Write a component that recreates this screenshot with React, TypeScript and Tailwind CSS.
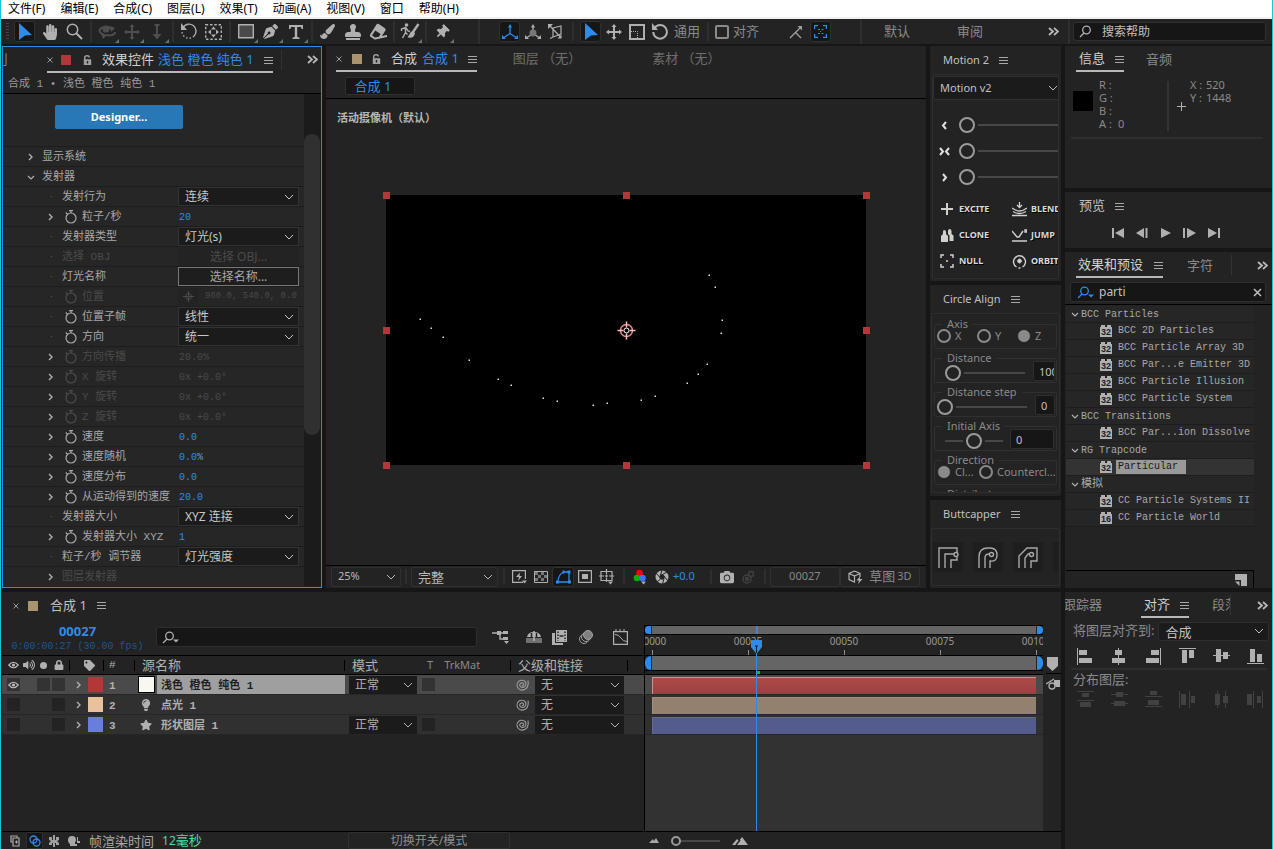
import { Fragment } from "react";
import type { ReactNode } from "react";
import clsx from "clsx";
import {
  FaCamera,
  FaEraser,
  FaHandPaper,
  FaLightbulb,
  FaLock,
  FaPaintBrush,
  FaPenNib,
  FaStamp,
  FaStar,
  FaTag,
  FaThumbtack,
  FaVolumeUp,
} from "react-icons/fa";

const mono = "font-['Liberation_Mono','Noto_Sans_CJK_SC',monospace]";

// ---------- Icons ----------

const Svg = ({
  w = 18,
  h = 18,
  stroke = "none",
  fill = "none",
  sw = 1.5,
  className,
  children,
}: {
  w?: number;
  h?: number;
  stroke?: string;
  fill?: string;
  sw?: number;
  className?: string;
  children: ReactNode;
}) => (
  <svg
    width={w}
    height={h}
    viewBox={`0 0 ${w} ${h}`}
    fill={fill}
    stroke={stroke}
    strokeWidth={sw}
    className={clsx("shrink-0", className)}
    aria-hidden="true"
  >
    {children}
  </svg>
);

const Chevron = ({ className }: { className?: string }) => (
  <Svg w={10} h={6} stroke="currentColor" sw={1} className={className}>
    <path d="M1 1l4 4 4-4" />
  </Svg>
);

const Caret = ({ open }: { open?: boolean }) =>
  open ? (
    <Svg w={8} h={8} stroke="#b0b0b0" sw={1.2}>
      <path d="M1 3l3 3 3-3" />
    </Svg>
  ) : (
    <Svg w={8} h={8} stroke="#b0b0b0" sw={1.4}>
      <path d="M2 1l3 3-3 3" />
    </Svg>
  );

const MenuIcon = () => (
  <Svg w={9} h={9} stroke="#a8a8a8" sw={1}>
    <path d="M0 1.500h9M0 4.500h9M0 7.500h9" />
  </Svg>
);

const MoreIcon = () => (
  <Svg w={11} h={9} stroke="#b8b8b8" sw={1.8}>
    <path d="M1 1l4 3.500-4 3.500M6 1l4 3.500-4 3.500" />
  </Svg>
);

const CloseIcon = () => (
  <Svg w={6} h={6} stroke="#9a9a9a" sw={1}>
    <path d="M.500.500l5 5M5.500.500l-5 5" />
  </Svg>
);

const UnlockIcon = () => (
  <Svg w={9} h={10} stroke="#a0a0a0" sw={1.4}>
    <path d="M1.700 5V2.500a2.300 1.800 0 014.600 0" />
    <path d="M1.500 5h6v4.300h-6z" fill="#a0a0a0" />
    <path d="M4.500 6v2.500" stroke="#232323" />
  </Svg>
);

const SelectIcon = () => (
  <Svg w={14} h={17} fill="#2d8ceb">
    <path d="M1 0l13 12-7 .500L1 17z" />
  </Svg>
);

const ZoomIcon = () => (
  <Svg w={17} h={17} stroke="#b0b0b0">
    <circle cx="6.500" cy="6.500" r="5.200" />
    <path d="M10.500 10.500l5.500 5.500" strokeWidth="2" />
  </Svg>
);

const SearchIcon = ({ color = "#b0b0b0", drop }: { color?: string; drop?: boolean }) => (
  <Svg w={18} h={13} stroke={color} sw={1.3}>
    <circle cx="7.500" cy="5" r="3.800" />
    <path d="M5 8l-4 4" />
    {drop && <path d="M11 8.500h6l-3 3z" fill={color} stroke="none" />}
  </Svg>
);

const OrbitIcon = () => (
  <Svg stroke="#4e4e4e" sw={2}>
    <path d="M6 12C-1 9 1 4 8 4c3 0 5 1 6 2M8 12c5 1 9 0 9-3" />
    <path d="M12 3l5 2-4 4zM3 10l6 2-4 4z" fill="#4e4e4e" stroke="none" />
    <circle cx="8" cy="6" r="3.500" fill="#4e4e4e" stroke="none" />
  </Svg>
);

const MoveIcon = ({ color }: { color: string }) => (
  <Svg w={16} h={16} stroke={color} sw={2}>
    <path d="M8 1v14M1 8h14" />
    <path d="M5.500 3L8 0l2.500 3zM5.500 13L8 16l2.500-3zM3 5.500L0 8l3 2.500zM13 5.500L16 8l-3 2.500z" fill={color} stroke="none" />
  </Svg>
);

const DollyIcon = () => (
  <Svg w={12} h={16} stroke="#4e4e4e" sw={2}>
    <path d="M6 1v12M3.500 1h5" />
    <path d="M1.500 10h9L6 15.500z" fill="#4e4e4e" stroke="none" />
  </Svg>
);

const RotateIcon = ({ dashed }: { dashed?: boolean }) => (
  <Svg w={18} h={17} stroke="#b0b0b0" sw={dashed ? 1.4 : 2}>
    {dashed ? (
      <>
        <path d="M3 4.500A7 7 0 1114 13" />
        <path d="M14 13A7 7 0 012 9" strokeDasharray="1.500 2" />
      </>
    ) : (
      <path d="M3.500 5A6.800 6.800 0 112.300 9" />
    )}
    <path d="M1 0v7h6z" fill="#b0b0b0" stroke="none" />
  </Svg>
);

const RegionIcon = () => (
  <Svg w={17} h={16} stroke="#b0b0b0" sw={1.4}>
    <path d="M.700 .700h15.600v14.600H.700z" strokeDasharray="2.500 1.800" />
    <path d="M8.500 2.500l2.500 3H6zM8.500 13.500l2.500-3H6zM3 8l3-2.500v5zM14 8l-3-2.500v5z" fill="#b0b0b0" stroke="none" />
  </Svg>
);

const RectIcon = () => (
  <Svg w={16} h={15} stroke="#b0b0b0" fill="#4a4a4a" sw={1.4}>
    <path d="M.700 .700h14.600v13.100H.700z" />
  </Svg>
);

const TypeIcon = () => (
  <Svg w={14} h={14} fill="#b0b0b0">
    <path d="M0 0h14v4h-1.500L12 2H8.200v10l2.300.600V14h-7v-1.400l2.300-.600V2H2l-.500 2H0z" />
  </Svg>
);

const RotoIcon = () => (
  <Svg w={20} h={17} stroke="#b0b0b0" sw={1.4}>
    <circle cx="6.500" cy="2" r="1.800" fill="#b0b0b0" stroke="none" />
    <path d="M1.500 8V6l4-1.500v5L2.500 15M6 5l2 3 2 .500M5.500 9.500l2 2" />
    <path d="M18.500 1L13 9" strokeWidth="2.400" />
    <path d="M13 8c-3 0-3 4-5.500 6 3 2 7 .500 7.500-4z" fill="#b0b0b0" stroke="none" />
  </Svg>
);

const AxisIcon = ({ color, ball }: { color: string; ball?: boolean }) => (
  <Svg w={16} h={16} stroke={color} sw={1.3}>
    <path d="M8 2v7.500L2 13.500M8 9.500l6 4" />
    <path d="M6 3.500L8 0l2 3.500zM0 15v-4l4 4zM16 15v-4l-4 4z" fill={color} stroke="none" />
    {ball && <circle cx="8" cy="9" r="3.500" fill="#777" stroke="none" />}
  </Svg>
);

const ViewAxisIcon = () => (
  <Svg w={15} h={16} stroke="#b0b0b0" sw={1.2}>
    <path d="M5 4l8-2v8l-8 3zM1.500 1.500L13 13.500M5 13l-3 1.500" />
    <path d="M0 0h5L0 5zM9.500 14.500h4v-4z" fill="#b0b0b0" stroke="none" />
  </Svg>
);

const ScaleIcon = () => (
  <Svg w={16} h={16} stroke="#b0b0b0" sw={2}>
    <path d="M1 1h14v14H1z" />
    <path d="M2 7.500h6.500V14" strokeWidth="1" strokeDasharray="1 1" />
  </Svg>
);

const SnapIcon = () => (
  <Svg w={14} h={14} stroke="#a0a0a0" sw={1.3}>
    <path d="M1 13l5.500-5.500L12 13M6.500 7.500L11 3" />
    <path d="M8.500 1H13v4.500z" fill="#a0a0a0" stroke="none" />
  </Svg>
);

const FrameIcon = () => (
  <Svg w={13} h={13} stroke="#2d8ceb" sw={1.2}>
    <path d="M.600 4V.600H4M9 .600h3.400V4M12.400 9v3.400H9M4 12.400H.600V9" />
    <path d="M4 4.500h2M7.500 4.500h2M4 8.500h2M7.500 8.500h2M6 6.500h1" />
  </Svg>
);

const StopwatchIcon = ({ dim }: { dim?: boolean }) => (
  <Svg w={12} h={14} stroke={dim ? "#4c4c4c" : "#a8a8a8"} sw={1.2}>
    <circle cx="6" cy="8" r="5" />
    <path d="M4 .600h4M6 1v2M.800 2.500l1.500 1.500" />
  </Svg>
);

const EyeIcon = () => (
  <Svg w={11} h={8} stroke="#b8b8b8" sw={1.2}>
    <path d="M.800 4Q5.500-1.500 10.200 4 5.500 9.500.800 4z" />
    <circle cx="5.500" cy="4" r="1.600" fill="#b8b8b8" stroke="none" />
  </Svg>
);

const SwirlIcon = () => (
  <Svg w={13} h={12} stroke="#a0a0a0" sw={1.1}>
    <path d="M6 6.500c.800.300 1.700-.200 1.700-1 0-1.200-1.200-1.800-2.300-1.500C4 4.400 3.400 5.800 4 7c.800 1.500 3 1.900 4.500.900C10.300 6.700 10.400 4 9 2.500 7.500 1 4.500.700 2.700 2.300.800 4 .600 7 2 9c1.500 2 4.500 2.500 7 1.300C11.500 9 12.600 5.500 12 1.500" />
  </Svg>
);

const Badge = ({ label }: { label: string }) => (
  <span className="relative inline-flex h-3 w-3 items-end justify-center bg-[#b0b0b0] font-['Liberation_Sans',sans-serif] text-[9px] leading-[10px] font-bold text-[#222]">
    {label}
    <span className="absolute top-0 left-0 h-[2px] w-px bg-[#232323]" />
    <span className="absolute top-0 left-[5px] h-[2px] w-[2px] bg-[#232323]" />
    <span className="absolute top-0 right-0 h-[2px] w-px bg-[#232323]" />
  </span>
);

// ---------- Shared controls ----------

const Dropdown = ({
  label,
  value,
  className,
}: {
  label: string;
  value: string;
  className?: string;
}) => (
  <span className={clsx("relative flex items-center", className)}>
    <select
      aria-label={label}
      defaultValue={value}
      className="h-full w-full appearance-none bg-transparent pr-5 pl-[6px] outline-none"
    >
      <option>{value}</option>
    </select>
    <Chevron className="pointer-events-none absolute right-1" />
  </span>
);

const Slider = ({
  label,
  value = 0,
  small,
  className,
}: {
  label: string;
  value?: number;
  small?: boolean;
  className?: string;
}) => (
  <input
    type="range"
    aria-label={label}
    defaultValue={value}
    className={clsx(
      "h-4 min-w-0 appearance-none bg-transparent [&::-webkit-slider-runnable-track]:h-[2px] [&::-webkit-slider-runnable-track]:bg-[#474747] [&::-webkit-slider-thumb]:appearance-none [&::-webkit-slider-thumb]:rounded-full [&::-webkit-slider-thumb]:border-2 [&::-webkit-slider-thumb]:border-[#9a9a9a] [&::-webkit-slider-thumb]:bg-[#232323]",
      small
        ? "[&::-webkit-slider-thumb]:-mt-1 [&::-webkit-slider-thumb]:size-[10px]"
        : "[&::-webkit-slider-thumb]:-mt-[7px] [&::-webkit-slider-thumb]:size-4 [&::-webkit-slider-thumb]:shadow-[3px_0_0_#232323,-3px_0_0_#232323]",
      className
    )}
  />
);

const Tab = ({ children, className }: { children: ReactNode; className?: string }) => (
  <div
    className={clsx(
      "flex h-[26px] items-center border-b-2 border-[#b8b8b8] pt-[2px] whitespace-nowrap text-[#d0d0d0]",
      className
    )}
  >
    {children}
  </div>
);

// ---------- Menu bar and tools ----------

const menus = ["文件(F)", "编辑(E)", "合成(C)", "图层(L)", "效果(T)", "动画(A)", "视图(V)", "窗口", "帮助(H)"];

const MenuBar = () => (
  <nav className="flex h-[19px] items-center gap-[15px] border-b-2 border-[#f0f0f0] bg-white pl-[7px] text-xs leading-4 text-black">
    {menus.map((m) => (
      <button key={m} className="whitespace-nowrap">
        {m}
      </button>
    ))}
  </nav>
);

type Tool = { name: string; icon: ReactNode; active?: boolean; more?: boolean };

const toolGroups: Tool[][] = [
  [
    { name: "选取", icon: <SelectIcon />, active: true },
    { name: "手形", icon: <FaHandPaper size={16} /> },
    { name: "缩放", icon: <ZoomIcon /> },
  ],
  [
    { name: "绕光标旋转", icon: <OrbitIcon />, more: true },
    { name: "平移", icon: <MoveIcon color="#4e4e4e" />, more: true },
    { name: "推拉", icon: <DollyIcon />, more: true },
  ],
  [
    { name: "旋转", icon: <RotateIcon dashed /> },
    { name: "向后平移", icon: <RegionIcon /> },
  ],
  [
    { name: "矩形", icon: <RectIcon />, more: true },
    { name: "钢笔", icon: <FaPenNib size={15} />, more: true },
    { name: "文字", icon: <TypeIcon />, more: true },
  ],
  [
    { name: "画笔", icon: <FaPaintBrush size={15} /> },
    { name: "仿制图章", icon: <FaStamp size={16} /> },
    { name: "橡皮擦", icon: <FaEraser size={17} className="-rotate-12" /> },
  ],
  [{ name: "Roto 笔刷", icon: <RotoIcon />, more: true }],
  [{ name: "人偶位置控点", icon: <FaThumbtack size={14} className="rotate-45" />, more: true }],
];

const Divider = ({ className }: { className?: string }) => (
  <span className={clsx("w-[2px] shrink-0 self-stretch bg-[#2e2e2e]", className)} />
);

const ToolButton = ({ tool, className }: { tool: Tool; className: string }) => (
  <button
    aria-label={tool.name}
    className={clsx("relative flex h-[22px] shrink-0 items-center justify-center text-[#b0b0b0]", className)}
  >
    <span
      className={clsx(
        "flex h-[21px] w-[21px] items-center justify-center rounded-[3px]",
        tool.active && "border border-[#303030] bg-[#161616]"
      )}
    >
      {tool.icon}
    </span>
    {tool.more && (
      <Svg w={4} h={4} fill="#707070" className="absolute right-0 bottom-0">
        <path d="M4 0v4H0z" />
      </Svg>
    )}
  </button>
);

const axisTools: Tool[] = [
  { name: "本地轴", icon: <AxisIcon color="#2d8ceb" />, active: true },
  { name: "世界轴", icon: <AxisIcon color="#b0b0b0" ball /> },
  { name: "视图轴", icon: <ViewAxisIcon /> },
];

const gizmoTools: Tool[] = [
  { name: "通用控件", icon: <SelectIcon />, active: true },
  { name: "位置控件", icon: <MoveIcon color="#b0b0b0" /> },
  { name: "缩放控件", icon: <ScaleIcon /> },
  { name: "旋转控件", icon: <RotateIcon /> },
];

const Toolbar = () => (
  <div className="flex h-[25px] items-center bg-[#232323] text-[13px] text-[#8a8a8a]">
    <Svg w={3} h={18} stroke="#454545" sw={3} className="mr-[3px] ml-[5px]">
      <path d="M1.500 0v18" strokeDasharray="1 2" />
    </Svg>
    {toolGroups.map((group, i) => (
      <Fragment key={i}>
        {i > 0 && <Divider className="my-[2px] mr-[2px] ml-[3px]" />}
        {group.map((t) => (
          <ToolButton key={t.name} tool={t} className="w-[25px]" />
        ))}
      </Fragment>
    ))}
    <Divider className="mr-[18px] ml-6" />
    {axisTools.map((t) => (
      <ToolButton key={t.name} tool={t} className="w-[23px]" />
    ))}
    <Divider className="mx-[5px] my-[3px]" />
    {gizmoTools.map((t) => (
      <ToolButton key={t.name} tool={t} className="w-[23px]" />
    ))}
    <span className="mr-[7px] ml-[3px] shrink-0">通用</span>
    <Divider className="my-[3px]" />
    <label className="ml-[6px] flex shrink-0 items-center gap-1">
      <input type="checkbox" className="size-[14px] appearance-none rounded-[2px] border-2 border-[#8a8a8a]" />
      对齐
    </label>
    <button aria-label="对齐选项" className="ml-[30px] shrink-0">
      <SnapIcon />
    </button>
    <ToolButton tool={{ name: "边界", icon: <FrameIcon />, active: true }} className="ml-1 w-[27px]" />
    <div className="flex min-w-0 flex-1 items-center self-stretch">
      <Divider className="ml-auto" />
      <button className="ml-[22px]">默认</button>
      <button className="ml-[47px]">审阅</button>
      <button aria-label="更多工作区" className="mr-[9px] ml-[65px]">
        <MoreIcon />
      </button>
    </div>
    <Divider className="mr-[3px]" />
    <label className="mr-[6px] flex h-[19px] w-[193px] shrink-0 items-center gap-[5px] rounded-[3px] border border-[#303030] bg-[#161616] pl-[5px]">
      <SearchIcon />
      <input
        aria-label="搜索帮助"
        placeholder="搜索帮助"
        className="min-w-0 flex-1 bg-transparent text-xs outline-none placeholder:text-[#c0c0c0]"
      />
    </label>
  </div>
);

// ---------- Effect controls ----------

type Param = {
  label: string;
  level?: number;
  arrow?: "open" | "closed";
  watch?: boolean;
  dim?: boolean;
  kind?: "select" | "num" | "button" | "point";
  value?: string;
  unit?: string;
};

const params: Param[] = [
  { label: "显示系统", level: 0, arrow: "closed" },
  { label: "发射器", level: 0, arrow: "open" },
  { label: "发射行为", kind: "select", value: "连续" },
  { label: "粒子/秒", arrow: "closed", watch: true, kind: "num", value: "20" },
  { label: "发射器类型", kind: "select", value: "灯光(s)" },
  { label: "选择 OBJ", kind: "button", value: "选择 OBJ...", dim: true },
  { label: "灯光名称", kind: "button", value: "选择名称..." },
  { label: "位置", watch: true, kind: "point", value: "960.0, 540.0, 0.0", dim: true },
  { label: "位置子帧", watch: true, kind: "select", value: "线性" },
  { label: "方向", watch: true, kind: "select", value: "统一" },
  { label: "方向传播", arrow: "closed", watch: true, kind: "num", value: "20.0%", dim: true },
  { label: "X 旋转", arrow: "closed", watch: true, kind: "num", value: "0x +0.0°", dim: true },
  { label: "Y 旋转", arrow: "closed", watch: true, kind: "num", value: "0x +0.0°", dim: true },
  { label: "Z 旋转", arrow: "closed", watch: true, kind: "num", value: "0x +0.0°", dim: true },
  { label: "速度", arrow: "closed", watch: true, kind: "num", value: "0.0" },
  { label: "速度随机", arrow: "closed", watch: true, kind: "num", value: "0.0", unit: "%" },
  { label: "速度分布", arrow: "closed", watch: true, kind: "num", value: "0.0" },
  { label: "从运动得到的速度", arrow: "closed", watch: true, kind: "num", value: "20.0" },
  { label: "发射器大小", kind: "select", value: "XYZ 连接" },
  { label: "发射器大小 XYZ", arrow: "closed", watch: true, kind: "num", value: "1" },
  { label: "粒子/秒 调节器", kind: "select", value: "灯光强度" },
  { label: "图层发射器", arrow: "closed", dim: true },
];

const ParamValue = ({ param }: { param: Param }) => {
  const { label, kind, value, dim, unit } = param;
  if (kind === "select") {
    return (
      <Dropdown
        label={label}
        value={value!}
        className="h-[19px] w-[121px] border border-[#333] bg-[#1b1b1b] text-xs leading-4 text-[#c8c8c8]"
      />
    );
  }
  if (kind === "button") {
    return (
      <button
        disabled={dim}
        className={clsx(
          "h-[19px] w-[121px] text-xs leading-4",
          dim ? "bg-[#232323] text-[#4a4a4a]" : "border border-[#777] bg-[#1e1e1e] text-[#a8a8a8]"
        )}
      >
        {value}
      </button>
    );
  }
  if (kind === "point") {
    return (
      <span className={clsx("flex items-center text-[9px] whitespace-pre text-[#4a4a4a]", mono)}>
        <span className="mr-[6px] flex h-[17px] w-[21px] items-center justify-center bg-[#232323]">
          <Svg w={11} h={11} stroke="#4a4a4a" sw={1}>
            <circle cx="5.500" cy="5.500" r="3" />
            <path d="M5.500 0v11M0 5.500h11" />
          </Svg>
        </span>
        {value}
      </span>
    );
  }
  return (
    <span className={clsx("pt-[2px] pl-px text-[10px]", mono, dim ? "text-[#4a4a4a]" : "text-[#2d8ceb]")}>
      {value}
      {unit && <span className="text-[#6f9cc8]">{unit}</span>}
    </span>
  );
};

const ParamRow = ({ param }: { param: Param }) => (
  <li className="flex h-5 items-center border-t border-[#1d1d1d]">
    <div
      className={clsx(
        "flex w-[175px] shrink-0 items-center text-[11px] leading-4 whitespace-nowrap",
        mono,
        param.level === 0 ? "pl-6" : "pl-11",
        param.dim ? "text-[#4a4a4a]" : "text-[#a8a8a8]"
      )}
    >
      <span className="mr-[7px] flex w-2 justify-center">
        {param.arrow ? <Caret open={param.arrow === "open"} /> : <span className="size-px bg-[#555]" />}
      </span>
      {param.watch && (
        <span className="mr-[5px] ml-[3px]">
          <StopwatchIcon dim={param.dim} />
        </span>
      )}
      {param.label}
    </div>
    {param.kind && <ParamValue param={param} />}
  </li>
);

const EffectControls = () => (
  <section className="flex w-[320px] shrink-0 flex-col border border-[#2d8ceb] bg-[#232323] pb-px">
    <div className="flex h-7 items-start text-[13px]">
      <span className="flex h-[26px] w-[5px] items-center justify-end overflow-hidden text-[#888]">刂</span>
      <Tab className="ml-[39px]">
        <CloseIcon />
        <span className="mr-3 ml-2 size-[10px] bg-[#b53638]" />
        <UnlockIcon />
        <span className="mr-1 ml-[10px]">效果控件</span>
        <span className="mr-[10px] text-[#2d8ceb]">浅色 橙色 纯色 1</span>
        <MenuIcon />
      </Tab>
      <span className="mt-[3px] ml-2 h-5 w-px bg-[#333]" />
      <button aria-label="更多面板" className="mt-2 mr-[3px] ml-auto">
        <MoreIcon />
      </button>
    </div>
    <div
      className={clsx(
        "flex h-[19px] items-center border-b border-black pt-px pl-[5px] text-[11px] whitespace-nowrap text-[#989898]",
        mono
      )}
    >
      合成 1 • 浅色 橙色 纯色 1
    </div>
    <div className="flex flex-1">
      <div className="min-w-0 flex-1 bg-[#262626]">
        <div className="h-[52px] pt-[9px] pl-[52px]">
          <button className="h-6 w-32 rounded-[2px] bg-[#2878b8] text-[11px] leading-5 font-bold text-white">
            Designer...
          </button>
        </div>
        <ul>
          {params.map((p) => (
            <ParamRow key={p.label} param={p} />
          ))}
        </ul>
      </div>
      <div className="w-[17px] bg-[#1b1b1b] pt-10 pr-px">
        <div className="h-[301px] rounded-full bg-[#303030]" />
      </div>
    </div>
  </section>
);

// ---------- Composition viewer ----------

const particles = [
  [323, 80], [329, 92], [336, 125], [335, 138], [321, 169], [312, 179], [301, 188], [269, 201], [255, 205], [221, 208],
  [207, 210], [171, 206], [157, 203], [125, 190], [112, 184], [83, 165], [57, 142], [45, 133], [34, 124],
];

const handles = [
  [0, 0], [240, 0], [480, 0],
  [0, 135], [480, 135],
  [0, 270], [240, 270], [480, 270],
];

const ViewerBar = () => (
  <div className="flex h-[23px] items-center border-t border-black pb-px pl-[5px] text-[13px] text-[#b8b8b8]">
    <Dropdown label="放大率" value="25%" className="h-5 w-[70px] rounded-[2px] border border-[#303030] text-[11px]" />
    <Divider className="mx-1 my-[3px]" />
    <Dropdown label="分辨率" value="完整" className="h-5 w-[87px] rounded-[2px] border border-[#303030]" />
    <Divider className="my-[3px] mr-[3px] ml-[5px]" />
    <div className="flex">
      <button aria-label="快速预览" className="flex h-5 w-[22px] items-center justify-center">
        <Svg w={15} h={14} stroke="#b0b0b0" sw={1.2}>
          <path d="M11 12.400H.600V.600h12.800V9" />
          <path d="M8 2.500L4 7h3l-1 4 4-5H7.500zM10 10.500h5l-2.500 3z" fill="#b0b0b0" stroke="none" />
        </Svg>
      </button>
      <button aria-label="透明网格" className="flex h-5 w-[22px] items-center justify-center">
        <Svg w={14} h={12} stroke="#b0b0b0" sw={1}>
          <path d="M.500.500h13v11H.500z" />
          <path d="M1 1h3v3H1zM7 1h3v3H7zM4 4h3v3H4zM10 4h3v3h-3zM1 7h3v3H1zM7 7h3v3H7z" fill="#777" stroke="none" />
        </Svg>
      </button>
      <button aria-label="蒙版可见性" className="flex h-5 w-[22px] items-center justify-center rounded-[3px] border border-[#303030] bg-[#161616]">
        <Svg w={15} h={14} stroke="#2d8ceb" sw={1.3}>
          <path d="M2 12C2 7 4 3.500 8 2h5v10z" />
          <path d="M0 10.500h3v3H0zM12 10.500h3v3h-3zM11.500.500h3v3h-3zM6.500.500h2v3h-2z" fill="#2d8ceb" stroke="none" />
        </Svg>
      </button>
      <button aria-label="目标区域" className="flex h-5 w-[22px] items-center justify-center">
        <Svg w={14} h={13} stroke="#b0b0b0" sw={1.2}>
          <path d="M.600.600h12.800v11.800H.600z" />
          <path d="M4 4h6v5H4z" fill="#b0b0b0" stroke="none" />
        </Svg>
      </button>
      <button aria-label="网格和参考线" className="flex h-5 w-[22px] items-center justify-center">
        <Svg w={16} h={16} stroke="#b0b0b0" sw={1.2}>
          <path d="M2 2.500h11v9H2zM7.500 0v5M7.500 9v4M0 7h5M10 7h5M6 7h3M7.500 5.500v3" />
          <path d="M9 12.500h5l-2.500 3z" fill="#b0b0b0" stroke="none" />
        </Svg>
      </button>
    </div>
    <Divider className="my-[3px] mr-1 ml-[5px]" />
    <button aria-label="显示通道" className="flex w-[22px] justify-center">
      <Svg w={14} h={16}>
        <circle cx="6.500" cy="4" r="3.300" fill="#ff0000" />
        <circle cx="4" cy="9" r="3.300" fill="#00b400" />
        <circle cx="9.500" cy="9" r="3.300" fill="#4070ff" />
        <path d="M8 12.500h5l-2.500 3z" fill="#b0b0b0" />
      </Svg>
    </button>
    <button aria-label="重置曝光度" className="flex w-[22px] justify-center">
      <Svg w={14} h={14} stroke="#232323" sw={1}>
        <circle cx="7" cy="7" r="6.500" fill="#b0b0b0" stroke="none" />
        <circle cx="7" cy="7" r="2.200" fill="#232323" />
        <path d="M7 4.800L12 2M9 6l3.500 4.500M9 8.500L7.500 14M5.500 9L2 12M5 7.500L1 3M5.500 5.500L7 0" />
      </Svg>
    </button>
    <button className="text-[11px] text-[#2d8ceb]">+0.0</button>
    <Divider className="my-[3px] mr-1 ml-[15px]" />
    <button aria-label="拍摄快照" className="flex w-[22px] justify-center text-[#b0b0b0]">
      <FaCamera size={14} />
    </button>
    <button aria-label="显示快照" className="flex w-[22px] justify-center">
      <Svg w={15} h={14} stroke="#404040" sw={1.5}>
        <circle cx="10" cy="4" r="2.500" />
        <circle cx="6" cy="9" r="4" />
        <circle cx="6" cy="9" r="1.500" fill="#404040" />
      </Svg>
    </button>
    <Divider className="mx-1 my-[3px]" />
    <button className="h-5 w-[70px] rounded-[2px] border border-[#303030] text-[11px] text-[#888]">00027</button>
    <button className="flex h-5 w-[80px] items-center justify-center gap-[5px] rounded-[2px] border border-[#303030] whitespace-nowrap text-[#888]">
      <Svg w={16} h={14} stroke="#b0b0b0" sw={1.2}>
        <path d="M6.500 1L12 3.500V7M6.500 1L1 3.500v6L6.500 12V6L1 3.500M6.500 6L12 3.500" />
        <path d="M12 6.500L8.500 10.500h2.500L10 14l4.500-5H12z" fill="#b0b0b0" stroke="none" />
      </Svg>
      <span className="flex items-center gap-[2px]">
        草图 <span className="text-[11px]">3D</span>
      </span>
    </button>
  </div>
);

const CompositionPanel = () => (
  <section className="flex min-w-0 flex-1 flex-col bg-[#232323]">
    <div className="flex h-7 items-start pl-[10px] text-[13px] whitespace-nowrap text-[#6e6e6e]">
      <Tab>
        <CloseIcon />
        <span className="mr-[10px] ml-[10px] size-[10px] bg-[#a8946e]" />
        <UnlockIcon />
        <span className="mr-[5px] ml-[10px]">合成</span>
        <span className="mr-[9px] text-[#2d8ceb]">合成 1</span>
        <MenuIcon />
      </Tab>
      <button className="mt-[3px] ml-9 h-5">图层 （无）</button>
      <button className="mt-[3px] ml-[71px] h-5">素材 （无）</button>
    </div>
    <div className="flex h-[25px] items-start border-b border-black pt-[3px] pl-[19px]">
      <button className="h-[18px] w-[70px] rounded-[2px] border border-[#303030] bg-[#161616] pr-[14px] text-[13px] leading-[14px] text-[#2d8ceb]">
        合成 1
      </button>
    </div>
    <div className="relative flex flex-1 items-center justify-center pb-1">
      <p className="absolute top-[11px] left-[11px] text-[11px] font-bold text-[#b8b8b8]">活动摄像机（默认）</p>
      <div className="aspect-video w-[480px] bg-black">
        <svg viewBox="0 0 480 270" className="h-full w-full overflow-visible">
          {particles.map(([x, y]) => (
            <rect key={`${x}-${y}`} x={x - 0.5} y={y - 0.5} width="1.500" height="1.500" fill="#e0e0e0" />
          ))}
          {handles.map(([x, y]) => (
            <rect key={`${x}-${y}`} x={x - 3} y={y - 3} width="7" height="7" fill="#b53638" />
          ))}
          <g transform="translate(240.500 135.500)" fill="none" strokeWidth="1.500">
            <circle r="6" stroke="#e88" />
            <circle r="2.500" stroke="#fff" strokeWidth="1" />
            <path d="M0-9v6M0 3v6M-9 0h6M3 0h6" stroke="#fbb" />
          </g>
        </svg>
      </div>
    </div>
    <ViewerBar />
  </section>
);

// ---------- Script panels ----------

const PanelTitle = ({ children }: { children: ReactNode }) => (
  <h2 className="flex h-7 shrink-0 items-center gap-[10px] pl-[13px] text-[11px] whitespace-nowrap text-[#c0c0c0]">
    {children}
    <MenuIcon />
  </h2>
);

const easeRows = [
  { name: "Ease in", d: "M7 1L4 4.500 7 8" },
  { name: "Ease both", d: "M1 1l3 3.500L1 8M10 1L7 4.500 10 8" },
  { name: "Ease out", d: "M4 1l3 3.500L4 8" },
];

const motionActions = [
  { name: "EXCITE", d: "M7 1v12M1 7h12", sw: 2 },
  { name: "BLEND", d: "M0 13.500h15M7.500 0v5M5 3l2.500 2.500L10 3M0 6q7.500 6 15 0M1 9.500q6.500 4 13 0", sw: 1.3 },
  {
    name: "CLONE",
    d: "M4 2a2 2 0 012 2v2l2 2v6H1V8l2-2V4a2 2 0 011-2zM9.500 1a2 2 0 012 2v3l2 1.500V13h-4V7.500L8 6V3a2 2 0 011.500-2z",
    filled: true,
  },
  { name: "JUMP", d: "M0 13h15M0 3l5 6h2l4-6M13 2h2v2h-2z", sw: 1.4 },
  { name: "NULL", d: "M1 4V1h3M10 1h3v3M13 10v3h-3M4 13H1v-3M6 7h2", sw: 1.5 },
  { name: "ORBIT", d: "M4.500 13a6 6 0 116 0M7.500 4.500v5M5 7h5M6.500 6h2v2h-2zM6.500 14h2", sw: 1.4 },
];

const MotionPanel = () => (
  <section className="flex h-[235px] flex-col bg-[#232323]">
    <PanelTitle>Motion 2</PanelTitle>
    <div className="mx-[2px] mb-[2px] flex-1 overflow-hidden rounded-[2px] border border-[#2e2e2e]">
      <Dropdown
        label="Motion preset"
        value="Motion v2"
        className="mt-px h-6 w-[130px] rounded-[2px] border border-[#303030] bg-[#1b1b1b] text-[11px] text-[#c0c0c0]"
      />
      <div className="flex flex-col gap-[10px] pt-[17px] pl-[6px]">
        {easeRows.map((r) => (
          <div key={r.name} className="flex h-4 items-center gap-[9px]">
            <Svg w={11} h={9} stroke="#e0e0e0" sw={2}>
              <path d={r.d} />
            </Svg>
            <Slider label={r.name} className="w-[106px] shrink-0" />
          </div>
        ))}
      </div>
      <div className="grid grid-cols-[72px_72px] gap-y-[10px] pt-4 pl-[7px]">
        {motionActions.map((a) => (
          <button
            key={a.name}
            className="flex h-4 items-center gap-1 text-[9px] font-bold whitespace-nowrap text-[#d8d8d8] [text-shadow:1px_1px_0_#000]"
          >
            <Svg
              w={15}
              h={15}
              stroke={a.filled ? "none" : "#d0d0d0"}
              fill={a.filled ? "#d0d0d0" : "none"}
              sw={a.sw}
            >
              <path d={a.d} />
            </Svg>
            {a.name}
          </button>
        ))}
      </div>
    </div>
  </section>
);

const Group = ({ legend, children }: { legend: string; children?: ReactNode }) => (
  <fieldset className="mx-[2px] flex h-[34px] min-w-0 items-end text-[11px] leading-[14px] text-[#8a8a8a]">
    <div className="relative mb-px flex h-[25px] w-full items-end rounded-[2px] border border-[#303030] pb-px">
      <span className="absolute -top-2 left-[7px] bg-[#232323] px-[5px]">{legend}</span>
      {children}
    </div>
  </fieldset>
);

const Radio = ({
  name,
  label,
  checked,
  className,
}: {
  name: string;
  label: string;
  checked?: boolean;
  className?: string;
}) => (
  <label className={clsx("relative mb-1 flex items-center gap-1 whitespace-nowrap", className)}>
    <input
      type="radio"
      name={name}
      defaultChecked={checked}
      className="size-[14px] shrink-0 appearance-none rounded-full border-2 border-[#8a8a8a] checked:border checked:border-[#232323] checked:bg-[#8a8a8a]"
    />
    {label}
  </label>
);

const NumberBox = ({ label, value, className }: { label: string; value: string; className: string }) => (
  <input
    aria-label={label}
    defaultValue={value}
    className={clsx(
      "h-5 shrink-0 rounded-[2px] border border-[#2e2e2e] bg-[#161616] px-[5px] text-[11px] text-[#c0c0c0] outline-none",
      className
    )}
  />
);

const CircleAlignPanel = () => (
  <section className="flex h-[211px] flex-col bg-[#232323]">
    <PanelTitle>Circle Align</PanelTitle>
    <div className="mx-px mb-[3px] h-[180px] overflow-hidden rounded-[2px] border border-[#2e2e2e] pt-[2px]">
      <Group legend="Axis">
        <Radio name="axis" label="X" className="ml-[2px] w-10" />
        <Radio name="axis" label="Y" className="w-10" />
        <Radio name="axis" label="Z" checked />
      </Group>
      <Group legend="Distance">
        <Slider label="Distance" className="relative ml-[10px] w-[80px]" />
        <NumberBox label="Distance value" value="100" className="mr-px ml-auto w-[22px] pr-0" />
      </Group>
      <Group legend="Distance step">
        <Slider label="Distance step" className="relative ml-[2px] w-[90px]" />
        <NumberBox label="Distance step value" value="0" className="mr-px ml-auto w-5" />
      </Group>
      <Group legend="Initial Axis">
        <Slider label="Initial Axis" value={50} className="relative ml-[10px] w-[58px]" />
        <NumberBox label="Initial Axis value" value="0" className="mr-[2px] ml-auto w-11" />
      </Group>
      <Group legend="Direction">
        <Radio name="direction" label="Cl..." checked className="ml-[2px] w-[42px]" />
        <Radio name="direction" label="Countercl..." />
      </Group>
      <Group legend="Distribute" />
    </div>
  </section>
);

const caps = [
  { name: "Butt cap", d: "M2 22V2h18v6M8 22V8h9M14 22V14h6v-3" },
  { name: "Round cap", d: "M2 22V11Q2 2 11 2h2q7 0 7 7t-7 6v7M8 22V12q0-4 4-4h1" },
  { name: "Bevel cap", d: "M2 22V10l8-8h10v13h-6v7M8 22V12l3-4h2" },
];

const ButtcapperPanel = () => (
  <section className="flex flex-1 flex-col bg-[#232323]">
    <PanelTitle>Buttcapper</PanelTitle>
    <div className="mx-px mb-[2px] flex flex-1 items-center gap-[10px] overflow-hidden rounded-[2px] border border-[#2e2e2e] px-px">
      {caps.map((c, i) => (
        <button key={c.name} aria-label={c.name} className="flex size-[30px] shrink-0 items-center justify-center bg-[#1e1e1e]">
          <Svg w={23} h={22} stroke="#a8a8a8" sw={1.4}>
            <path d={c.d} />
            <circle cx={i === 0 ? 19 : 14.5} cy="8.500" r="2" fill="#1e1e1e" />
          </Svg>
        </button>
      ))}
      <span className="size-[30px] shrink-0 bg-[#1e1e1e]" />
    </div>
  </section>
);

// ---------- Right column ----------

const InfoPanel = () => (
  <section className="h-[142px] bg-[#232323]">
    <div className="flex h-[26px] items-start text-[13px] text-[#8a8a8a]">
      <Tab className="ml-[11px] gap-[10px] pl-[3px]">
        信息
        <MenuIcon />
      </Tab>
      <button className="mt-1 ml-[22px] h-5">音频</button>
    </div>
    <div className="mr-[9px] ml-[6px] flex h-[67px] border-b-2 border-[#2e2e2e] pt-[6px] text-[11px] leading-[13px] text-[#8a8a8a]">
      <span className="mt-[13px] ml-[2px] size-5 bg-black" />
      <dl className="ml-[6px] grid w-[68px] grid-cols-[19px_1fr] content-start">
        <dt>R :</dt>
        <dd />
        <dt>G :</dt>
        <dd />
        <dt>B :</dt>
        <dd />
        <dt>A :</dt>
        <dd>0</dd>
      </dl>
      <span className="mt-[3px] h-[50px] w-[2px] bg-[#333]" />
      <Svg w={9} h={9} stroke="#b0b0b0" sw={1} className="mt-6 ml-2">
        <path d="M4.500 0v9M0 4.500h9" />
      </Svg>
      <dl className="ml-1 grid grid-cols-[16px_1fr] content-start">
        <dt>X :</dt>
        <dd>520</dd>
        <dt>Y :</dt>
        <dd>1448</dd>
      </dl>
    </div>
  </section>
);

const transport = [
  { name: "第一帧", d: "M1 1h2v10H1zM13 1v10L4 6z" },
  { name: "上一帧", d: "M9 1v10L1 6zM10.500 1h2v10h-2z" },
  { name: "播放", d: "M2 1v10l10-5z" },
  { name: "下一帧", d: "M0 1h2v10H0zM4 1v10l9-5z" },
  { name: "最后一帧", d: "M1 1v10l9-5zM11 1h2v10h-2z" },
];

const PreviewPanel = () => (
  <section className="h-14 bg-[#232323]">
    <h2 className="flex h-7 items-center gap-[10px] pl-[14px] text-[13px] text-[#c0c0c0]">
      预览
      <MenuIcon />
    </h2>
    <div className="flex gap-[10px] pt-[7px] pl-[46px]">
      {transport.map((t) => (
        <button key={t.name} aria-label={t.name}>
          <Svg w={14} h={12} fill="#b0b0b0">
            <path d={t.d} />
          </Svg>
        </button>
      ))}
    </div>
  </section>
);

const effectTree = [
  {
    group: "BCC Particles",
    items: ["BCC 2D Particles", "BCC Particle Array 3D", "BCC Par...e Emitter 3D", "BCC Particle Illusion", "BCC Particle System"],
  },
  { group: "BCC Transitions", items: ["BCC Par...ion Dissolve"] },
  { group: "RG Trapcode", items: ["Particular"] },
  { group: "模拟", items: ["CC Particle Systems II", "CC Particle World"] },
];

const EffectsPanel = () => (
  <section className="flex flex-1 flex-col bg-[#232323]">
    <div className="flex h-[30px] items-start text-[13px] whitespace-nowrap text-[#8a8a8a]">
      <Tab className="ml-[11px] gap-[11px] pl-[2px]">
        效果和预设
        <MenuIcon />
      </Tab>
      <button className="mt-1 ml-[24px] h-5">字符</button>
      <span className="mt-[3px] ml-[18px] h-5 w-px bg-[#333]" />
      <button aria-label="更多面板" className="mt-[9px] mr-1 ml-auto">
        <MoreIcon />
      </button>
    </div>
    <div className="mr-[6px] ml-[5px] flex h-5 items-center rounded-[3px] border border-[#2e2e2e] bg-[#161616] pr-[3px] pl-[6px]">
      <SearchIcon color="#2d8ceb" drop />
      <input
        aria-label="搜索效果"
        defaultValue="parti"
        className="ml-1 min-w-0 flex-1 bg-transparent text-xs text-[#c0c0c0] outline-none"
      />
      <button aria-label="清除">
        <Svg w={9} h={9} stroke="#c0c0c0" sw={1.5}>
          <path d="M1 1l7 7M8 1L1 8" />
        </Svg>
      </button>
    </div>
    <div className={clsx("mt-[2px] flex-1 border-t border-black pt-px text-[10px] text-[#a8a8a8]", mono)}>
      <ul className="mr-[18px] ml-px">
        {effectTree.map(({ group, items }) => (
          <li key={group}>
            <div className="flex h-[17px] items-center border-b border-[#1d1d1d] bg-[#262626] pl-[5px]">
              <span className="mr-[2px]">
                <Caret open />
              </span>
              <span className={clsx(group === "模拟" && "text-[11px]")}>{group}</span>
            </div>
            <ul>
              {items.map((item) => {
                const selected = item === "Particular";
                return (
                  <li
                    key={item}
                    className={clsx(
                      "flex h-[17px] items-center border-b border-[#1d1d1d] pl-[34px] whitespace-nowrap",
                      selected ? "bg-[#333]" : "bg-[#262626]"
                    )}
                  >
                    <Badge label={item === "CC Particle World" ? "16" : "32"} />
                    <span className={clsx("ml-1 px-[2px] leading-[14px]", selected && "bg-[#999] pr-2 text-[#1a1a1a]")}>
                      {item}
                    </span>
                  </li>
                );
              })}
            </ul>
          </li>
        ))}
      </ul>
    </div>
    <div className="mr-[18px] ml-px flex h-[18px] items-center justify-end border-t border-r border-black pr-[6px]">
      <button aria-label="新建动画预设">
        <Svg w={12} h={12} fill="#b0b0b0">
          <path d="M0 0h12v12H6V6H0zM0 7.500h4.500V12z" />
        </Svg>
      </button>
    </div>
  </section>
);

// ---------- Timeline ----------

type Layer = {
  id: number;
  name: string;
  label: string;
  bar: string;
  icon: ReactNode;
  mode?: string;
  selected?: boolean;
};

const layers: Layer[] = [
  {
    id: 1,
    name: "浅色 橙色 纯色 1",
    label: "bg-[#b53638]",
    bar: "border-[#d09090] bg-linear-to-b from-[#b04848] to-[#974343]",
    icon: <span className="size-[17px] border border-black bg-[#faf6f0]" />,
    mode: "正常",
    selected: true,
  },
  {
    id: 2,
    name: "点光 1",
    label: "bg-[#e8c29d]",
    bar: "border-[#a38d78] bg-[#93806f]",
    icon: <FaLightbulb size={12} />,
  },
  {
    id: 3,
    name: "形状图层 1",
    label: "bg-[#677de0]",
    bar: "border-[#6068a0] bg-[#535c8d]",
    icon: <FaStar size={12} />,
    mode: "正常",
  },
];

const HeadCell = ({ children }: { children?: ReactNode }) => (
  <th className="p-0 font-normal">
    <div className="flex h-[18px] items-center">
      {children}
      <span className="ml-auto h-[11px] w-px bg-black" />
    </div>
  </th>
);

const LayerTable = () => (
  <table className="w-full table-fixed border-collapse text-left">
    <colgroup>
      <col className="w-[68px]" />
      <col className="w-[34px]" />
      <col className="w-[31px]" />
      <col className="w-[210px]" />
      <col className="w-[75px]" />
      <col className="w-[91px]" />
      <col className="w-[117px]" />
      <col className="w-4" />
    </colgroup>
    <thead className="border-y border-black text-[13px] leading-4 whitespace-nowrap text-[#b0b0b0]">
      <tr className="h-[19px]">
        <HeadCell>
          <span className="flex items-center gap-[4px] pl-[6px]">
            <EyeIcon />
            <FaVolumeUp size={12} />
            <span className="mx-px size-[7px] rounded-full bg-[#b0b0b0]" />
            <FaLock size={10} className="ml-[2px]" />
          </span>
        </HeadCell>
        <HeadCell>
          <FaTag size={11} className="ml-[14px]" />
        </HeadCell>
        <HeadCell>
          <span className={clsx("pl-[5px] text-[11px]", mono)}>#</span>
        </HeadCell>
        <HeadCell>
          <span className="pl-[7px]">源名称</span>
        </HeadCell>
        <th className="p-0 pl-[7px] font-normal">模式</th>
        <HeadCell>
          <span className="pl-[7px] text-[11px] text-[#8a8a8a]">T</span>
          <span className="pl-[11px] text-[11px] text-[#8a8a8a]">TrkMat</span>
        </HeadCell>
        <HeadCell>
          <span className="pl-[7px]">父级和链接</span>
        </HeadCell>
        <th />
      </tr>
    </thead>
    <tbody className="text-[#b0b0b0]">
      {layers.map((l) => {
        const cell = clsx("h-[13px] w-[13px]", l.selected ? "bg-[#333]" : "bg-[#232323]");
        return (
          <tr key={l.id} className={clsx("h-5 border-b border-[#262626]", l.selected ? "bg-[#4a4a4a]" : "bg-[#303030]")}>
            <td className="p-0">
              <span className="flex items-center pl-[5px]">
                <span className={clsx(cell, "flex items-center justify-center")}>{l.selected && <EyeIcon />}</span>
                <span className={clsx("ml-[17px]", l.selected ? cell : "w-[13px]")} />
                <span className={clsx("ml-[2px]", cell)} />
              </span>
            </td>
            <td className="p-0">
              <span className="flex items-center pl-[5px]">
                <Caret />
                <span className={clsx("ml-[5px] size-[15px]", l.label)} />
              </span>
            </td>
            <td className={clsx("p-0 pt-[2px] pl-[5px] text-[11px] leading-4 font-bold", mono)}>{l.id}</td>
            <td className="p-0">
              <span className="flex h-[19px] items-center">
                <span className="flex w-[22px] items-center justify-center">{l.icon}</span>
                <span
                  className={clsx(
                    "h-[19px] flex-1 pt-1 pl-1 text-[11px] leading-[15px] font-bold",
                    mono,
                    l.selected && "bg-[#9f9f9f] text-[#1e1e1e]"
                  )}
                >
                  {l.name}
                </span>
              </span>
            </td>
            <td className="p-0 pl-1">
              {l.mode && (
                <Dropdown label={`${l.name} 模式`} value={l.mode} className="h-[18px] w-[68px] bg-[#1b1b1b] text-xs" />
              )}
            </td>
            <td className="p-0 pl-[2px]">{l.mode && <span className={clsx("block", cell)} />}</td>
            <td className="p-0">
              <span className="flex items-center gap-[6px] pl-[5px]">
                <SwirlIcon />
                <Dropdown label={`${l.name} 父级`} value="无" className="h-[18px] w-[89px] bg-[#1b1b1b] text-xs" />
              </span>
            </td>
            <td />
          </tr>
        );
      })}
    </tbody>
  </table>
);

const ticks = [
  { at: 0, text: "00000" },
  { at: 25, text: "00025" },
  { at: 50, text: "00050" },
  { at: 75, text: "00075" },
  { at: 100, text: "00100" },
];

const currentFrame = 27.2;

const RangeBar = ({ className }: { className: string }) => (
  <div className={clsx("flex border-y border-black", className)}>
    <span className="w-[6px] rounded-l-md bg-[#2d8ceb]" />
    <span className="ml-px flex-1 bg-[#656565]" />
    <span className="ml-px w-[6px] rounded-r-md bg-[#2d8ceb]" />
  </div>
);

const TimeGraph = () => (
  <div className="relative flex min-w-0 flex-1 flex-col overflow-hidden">
    <RangeBar className="h-[10px]" />
    <div className="relative mx-[7px] h-5">
      {ticks.map((t) => (
        <div key={t.at} className="absolute inset-y-0" style={{ left: `${t.at}%` }}>
          <span className="absolute -top-px -left-4 w-8 text-center text-[10px] leading-[14px] text-[#989898]">{t.text}</span>
          <span className="absolute bottom-0 left-0 h-[5px] w-px bg-[#909090]" />
        </div>
      ))}
    </div>
    <RangeBar className="h-4" />
    <div className="h-[4px] border-b border-black" />
    <div className="flex flex-1 flex-col bg-[#323232]">
      {layers.map((l) => (
        <div
          key={l.id}
          className={clsx("h-5 border-b border-[#262626] px-[7px] pt-[2px]", l.selected ? "bg-[#4a4a4a]" : "bg-[#303030]")}
        >
          <div className={clsx("h-[17px] border-t border-l", l.bar)} />
        </div>
      ))}
    </div>
    <div className="pointer-events-none absolute inset-x-[7px] inset-y-0">
      <div className="absolute inset-y-0" style={{ left: `${currentFrame}%` }}>
        <span className="absolute top-[15px] bottom-0 left-0 w-px bg-[#2d8ceb]" />
        <span className="absolute top-px left-0 h-2 w-[2px] bg-[#4a84c0]" />
        <span className="absolute top-[46px] left-px h-[3px] w-[3px] bg-[#1fb91f]" />
        <svg width="11" height="14" viewBox="0 0 11 14" className="absolute top-[15px] -left-[5px]" fill="#2d8ceb">
          <path d="M0 0h11v7l-5.500 7L0 7z" />
          <path d="M4 6h3M5.500 6v7" stroke="#1a1a1a" />
        </svg>
      </div>
    </div>
  </div>
);

const TimelinePanel = () => (
  <section className="flex min-w-0 flex-1 flex-col bg-[#232323]">
    <div className="flex h-[33px] items-start">
      <div className="flex h-[27px] items-center pl-[11px] text-[13px] text-[#c0c0c0]">
        <CloseIcon />
        <span className="mr-3 ml-[9px] size-[10px] bg-[#a8946e]" />
        合成 1
        <span className="ml-[10px]">
          <MenuIcon />
        </span>
      </div>
    </div>
    <div className="flex flex-1">
      <div className="w-[642px] shrink-0">
        <div className="flex h-[30px] items-start">
          <div className="w-[154px] shrink-0 pr-[3px] text-center">
            <p className="h-[13px] text-[13px] leading-[13px] font-bold text-[#2d8ceb]">00027</p>
            <p className={clsx("pt-[2px] text-[10px] leading-[14px] whitespace-nowrap text-[#1c5690]", mono)}>
              0:00:00:27 (30.00 fps)
            </p>
          </div>
          <label className="mt-[2px] flex h-5 w-[321px] items-center rounded-[3px] border border-[#2e2e2e] bg-[#161616] pl-[5px]">
            <SearchIcon drop />
            <input aria-label="搜索图层" className="min-w-0 flex-1 bg-transparent text-xs text-[#c0c0c0] outline-none" />
          </label>
          <div className="flex h-6 items-center pl-[15px]">
            <button aria-label="合成微型流程图" className="mr-4">
              <Svg w={18} h={14} stroke="#b0b0b0" sw={1.4}>
                <path d="M0 3h6M8 3v6h4M7 3h5M12 9h4" />
                <path d="M5 1h4v4H5zM11 1h5v3h-5zM11 7h5v3h-5zM12 11h5l-2.500 3z" fill="#b0b0b0" stroke="none" />
              </Svg>
            </button>
            <button aria-label="消隐" className="mr-[10px]">
              <Svg w={16} h={14}>
                <path d="M0 8h16v5H0z" fill="#707070" />
                <path d="M8 1v10" stroke="#b0b0b0" strokeWidth="1.600" />
                <path d="M1 7q1-5 7-5t7 5z" fill="#b0b0b0" />
                <path d="M5.500 3v4M10.500 3v4" stroke="#232323" />
              </Svg>
            </button>
            <button aria-label="帧混合" className="mr-3">
              <Svg w={15} h={15} fill="#b0b0b0">
                <path d="M0 3h3v10h8v2H0zM4 0h11v12H4z" />
                <path d="M6 1.500v9.500M13 1.500v9.500" stroke="#232323" strokeDasharray="1.500 1.500" />
                <path d="M7.500 6h4" stroke="#232323" />
              </Svg>
            </button>
            <button aria-label="运动模糊" className="mr-5">
              <Svg w={14} h={14} stroke="#a0a0a0" sw={1}>
                <circle cx="5" cy="9" r="4.500" />
                <circle cx="7" cy="7" r="4.500" fill="#232323" />
                <circle cx="9" cy="5" r="4.500" fill="#808080" />
              </Svg>
            </button>
            <button aria-label="图表编辑器">
              <Svg w={15} h={16} stroke="#b0b0b0" sw={1.2}>
                <path d="M.600 2.600h13.800v12.800H.600z" />
                <path d="M3 0v2M7 0v2M11 0v2M2 5.500q4 0 6 3.500t6 3.500" strokeWidth="1" />
              </Svg>
            </button>
          </div>
        </div>
        <LayerTable />
      </div>
      <div className="flex min-w-0 flex-1 border-l border-black">
        <TimeGraph />
        <div className="w-[18px] shrink-0 pt-[32px] pl-[3px]">
          <div className="h-[17px] border-b border-black">
            <Svg w={13} h={14} fill="#b0b0b0">
              <path d="M1 0h11v9l-5.500 5L1 9z" />
            </Svg>
          </div>
          <Svg w={14} h={12} stroke="#b0b0b0" sw={1.3} className="mt-1">
            <circle cx="6" cy="8" r="3" />
            <path d="M0 6l8-5" />
            <path d="M8 2h6v7h-4l-2-3z" fill="#b0b0b0" stroke="none" />
          </Svg>
        </div>
      </div>
    </div>
    <div className="flex h-[18px] items-center border-t border-black text-[13px] leading-4 text-[#a8a8a8]">
      <div className="flex w-[346px] shrink-0 items-center pl-2 whitespace-nowrap">
        <Svg w={11} h={12} stroke="#a8a8a8" sw={1.2} className="mr-[5px]">
          <path d="M7 3V1H1v6h2M3 3h6v8H3z" />
          <path d="M5 7h3M6.500 5.500v3" />
        </Svg>
        <button aria-label="图层开关" className="mr-[6px] flex h-[17px] w-[17px] items-center justify-center rounded-[2px] border border-[#2e2e2e] bg-[#161616]">
          <Svg w={12} h={12} stroke="#2d8ceb" sw={1.3}>
            <circle cx="4.500" cy="4.500" r="3.500" />
            <circle cx="7.500" cy="7.500" r="3.500" />
          </Svg>
        </button>
        <Svg w={10} h={12} fill="#a0a0a0" className="mr-2">
          <path d="M0 2h3v3h1V0h2v5h1V2h3v3L8 6l2 2v2H7V8H6v4H4V8H3v2H0V8l2-2-2-1z" />
        </Svg>
        <Svg w={14} h={12} fill="#a8a8a8" className="mr-2">
          <path d="M5 1a4 4 0 014 4c0 1.500-1 2-1 3v1h2v2H3V9C1.500 8 1 6.500 1 5a4 4 0 014-4zM10 2h1v4h2v2h-3z" />
        </Svg>
        帧渲染时间
        <span className="ml-2 text-[#4fd8a0]">
          <span className="text-xs">12</span>毫秒
        </span>
      </div>
      <button className="h-[17px] w-[162px] shrink-0 rounded-[2px] border border-[#303030] text-xs leading-[15px] text-[#909090]">
        切换开关/模式
      </button>
      <div className="ml-[139px] flex items-center">
        <Svg w={10} h={5} fill="#a8a8a8">
          <path d="M0 5l4-4 1 2 2-3 3 5z" />
        </Svg>
        <Slider label="时间缩放" small className="mx-3 w-[49px]" />
        <Svg w={16} h={8} fill="#b0b0b0">
          <path d="M0 8l5-6 2 2 3-4 6 8z" />
          <path d="M4 8l4-5" stroke="#232323" />
        </Svg>
      </div>
    </div>
  </section>
);

// ---------- Align ----------

const alignButtons = [
  { name: "左对齐", d: "M0 0h1v17H0zM2 2h8v5H2zM2 10h13v5H2z" },
  { name: "水平居中", d: "M7 0h1v17H7zM4 2h7v5H4zM1 10h13v5H1z" },
  { name: "右对齐", d: "M15 0h1v17h-1zM6 2h8v5H6zM1 10h13v5H1z" },
  { name: "顶对齐", d: "M0 0h17v1H0zM3 2h5v13H3zM10 2h5v8h-5z" },
  { name: "垂直居中", d: "M0 7h17v1H0zM3 1h5v13H3zM10 4h5v7h-5z" },
  { name: "底对齐", d: "M0 15h17v1H0zM3 1h5v13H3zM10 6h5v8h-5z" },
];

const distributeButtons = [
  { name: "按顶分布", d: "M0 0h17v1H0zM5 2h7v4H5zM0 9h17v1H0zM3 11h11v5H3z" },
  { name: "垂直分布", d: "M0 3h17v1H0zM5 1h7v5H5zM0 12h17v1H0zM3 10h11v5H3z" },
  { name: "按底分布", d: "M5 0h7v4H5zM0 5h17v1H0zM3 9h11v5H3zM0 15h17v1H0z" },
  { name: "按左分布", d: "M0 0h1v17H0zM2 3h5v11H2zM10 0h1v17h-1zM12 5h4v7h-4z" },
  { name: "水平分布", d: "M4 0h1v17H4zM2 3h5v11H2zM12 0h1v17h-1zM10 5h5v7h-5z" },
  { name: "按右分布", d: "M0 3h5v11H0zM6 0h1v17H6zM10 5h4v7h-4zM15 0h1v17h-1z" },
];

const AlignPanel = () => (
  <section className="w-[207px] shrink-0 bg-[#232323] text-[13px] text-[#8a8a8a]">
    <div className="flex h-[29px] items-start whitespace-nowrap">
      <span className="flex h-[26px] w-[37px] shrink-0 items-center justify-end overflow-hidden">跟踪器</span>
      <Tab className="ml-[39px] shrink-0 gap-[10px] pl-[3px]">
        对齐
        <MenuIcon />
      </Tab>
      <span className="ml-[23px] flex h-[26px] w-[18px] shrink-0 items-center overflow-hidden">段落</span>
      <span className="mt-[3px] h-5 w-px shrink-0 bg-[#333]" />
      <button aria-label="更多面板" className="mt-[9px] mr-1 ml-auto">
        <MoreIcon />
      </button>
    </div>
    <label className="flex h-[20px] items-center pl-2 whitespace-nowrap">
      将图层对齐到:
      <Dropdown
        label="将图层对齐到"
        value="合成"
        className="mr-[3px] ml-1 h-[19px] flex-1 rounded-[3px] border border-[#2e2e2e] bg-[#1b1b1b] text-[#c0c0c0]"
      />
    </label>
    <div className="mr-[5px] ml-[6px] flex justify-between border-b-2 border-[#2e2e2e] pt-[7px] pr-[3px] pb-[3px] pl-[6px]">
      {alignButtons.map((b) => (
        <button key={b.name} aria-label={b.name}>
          <Svg w={17} h={17} fill="#b0b0b0">
            <path d={b.d} />
          </Svg>
        </button>
      ))}
    </div>
    <p className="h-[18px] pl-2 leading-[18px]">分布图层:</p>
    <div className="mr-2 ml-3 flex justify-between pt-[3px]">
      {distributeButtons.map((b) => (
        <button key={b.name} aria-label={b.name} disabled>
          <Svg w={17} h={17} fill="#414141">
            <path d={b.d} />
          </Svg>
        </button>
      ))}
    </div>
  </section>
);

export default function App() {
  return (
    <div className="flex min-h-screen flex-col border-x border-[#16c8d0] bg-[#161616] font-['Noto_Sans','Noto_Sans_CJK_SC',sans-serif]">
      <MenuBar />
      <Toolbar />
      <main className="flex flex-1 flex-col gap-1 pt-[2px] pl-px">
        <div className="flex gap-1">
          <EffectControls />
          <CompositionPanel />
          <div className="flex w-[131px] shrink-0 flex-col gap-1">
            <MotionPanel />
            <CircleAlignPanel />
            <ButtcapperPanel />
          </div>
          <div className="flex w-[207px] shrink-0 flex-col gap-1">
            <InfoPanel />
            <PreviewPanel />
            <EffectsPanel />
          </div>
        </div>
        <div className="flex flex-1 gap-1">
          <TimelinePanel />
          <AlignPanel />
        </div>
      </main>
    </div>
  );
}
